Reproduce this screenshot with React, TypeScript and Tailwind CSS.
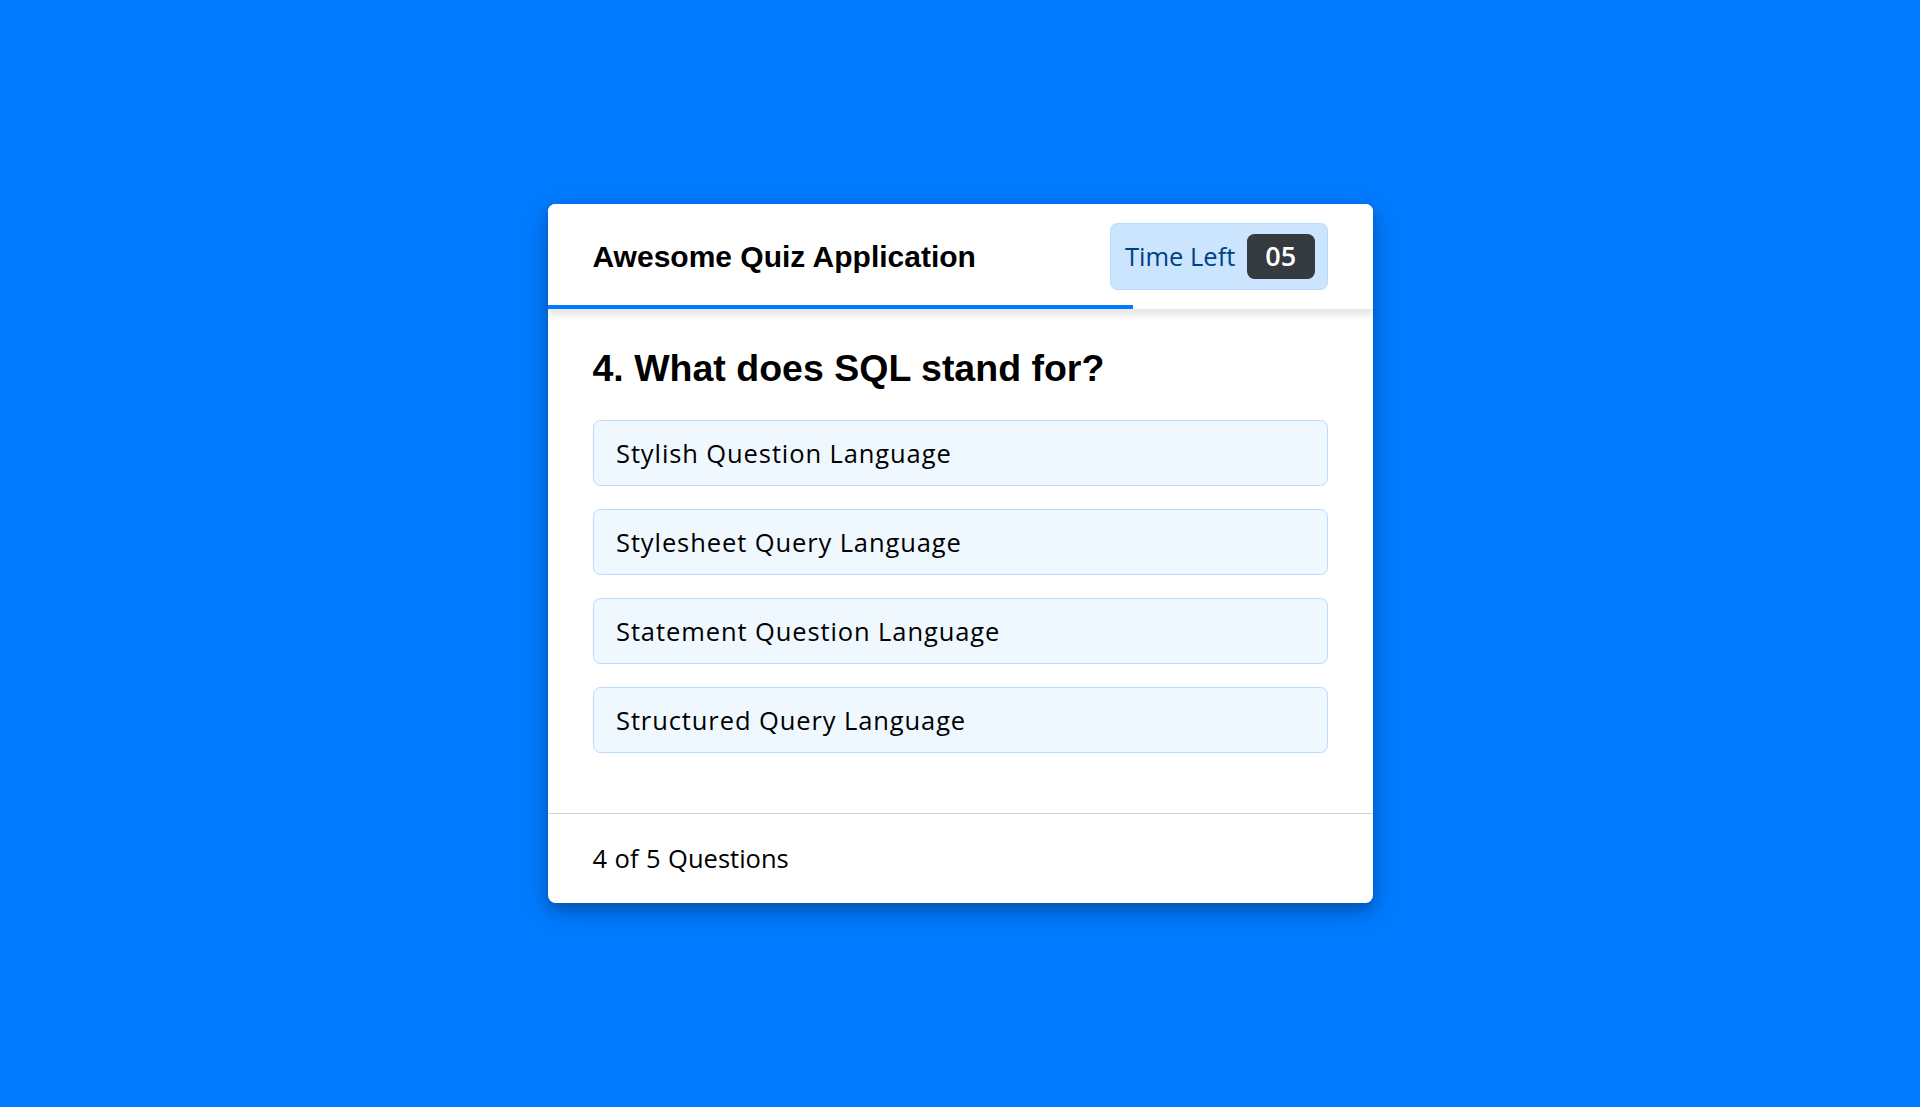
import React from 'react';

const options = [
  'Stylish Question Language',
  'Stylesheet Query Language',
  'Statement Question Language',
  'Structured Query Language',
];

const App: React.FC = () => {
  return (
    <div className="w-full h-[1107px] bg-[#007bff] flex items-center justify-center font-['Open_Sans',sans-serif]">
      <div className="w-[825px] bg-white rounded-[7.5px] overflow-hidden shadow-[0_6px_12px_0_rgba(0,0,0,0.2),0_9px_30px_0_rgba(0,0,0,0.19)]">
        {/* header */}
        <header className="relative z-10 h-[105px] px-[45px] flex items-center justify-between bg-white shadow-[0_4.5px_7.5px_1.5px_rgba(0,0,0,0.1)]">
          <div className="font-['Liberation_Sans',Arial,sans-serif] text-[30px] font-bold text-black">
            Awesome Quiz Application
          </div>
          <div className="w-[217.5px] h-[67.5px] px-[12px] flex items-center justify-between bg-[#cce5ff] border-[1.5px] border-[#b8daff] rounded-[7.5px]">
            <span className="text-[25.5px] text-[#004085] pl-[2px]">Time Left</span>
            <span className="w-[67.5px] h-[45px] flex items-center justify-center bg-[#343a40] rounded-[7.5px] text-white text-[27px] font-semibold">
              05
            </span>
          </div>
          <div className="absolute left-0 bottom-0 h-[4.5px] w-[585px] bg-[#007bff]" />
        </header>

        {/* question */}
        <section className="pt-[37.5px] pb-[30px] px-[45px]">
          <h2 className="font-['Liberation_Sans',Arial,sans-serif] text-[37.5px] font-bold text-black leading-[43px]">
            4. What does SQL stand for?
          </h2>
          <div className="py-[30px] flex flex-col gap-[22.5px]">
            {options.map((o) => (
              <div
                key={o}
                className="bg-[#f0f8ff] border-[1.5px] border-[#b8daff] rounded-[7.5px] px-[22.5px] py-[12px] text-[25.5px] leading-[40.5px] tracking-[0.9px] text-black"
              >
                {o}
              </div>
            ))}
          </div>
        </section>

        {/* footer */}
        <footer className="h-[90px] px-[45px] flex items-center border-t-[1.5px] border-[#d3d3d3]">
          <span className="flex text-[25.5px] text-black">
            <span className="font-medium">4</span>
            <span className="px-[7.5px]">of</span>
            <span className="font-medium">5</span>
            <span className="pl-[7.5px]">Questions</span>
          </span>
        </footer>
      </div>
    </div>
  );
};

export default App;
